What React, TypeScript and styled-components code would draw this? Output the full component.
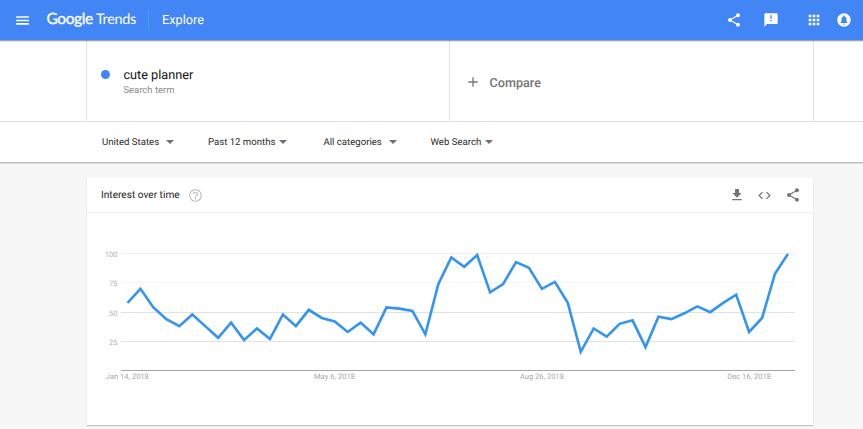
import React from 'react';
import styled, { createGlobalStyle } from 'styled-components';

const GlobalStyle = createGlobalStyle`
  * { box-sizing: border-box; }
  html, body { margin: 0; height: 100%; overflow: hidden; }
  body { background: #f7f7f7; font-family: Roboto, "Liberation Sans", sans-serif; color: #212121; text-rendering: geometricPrecision; }
`;

const Page = styled.div`
  width: 863px;
  height: 429px;
  overflow: hidden;
  background: #f7f7f7;
`;

const TopBar = styled.header`
  position: relative;
  display: flex;
  align-items: center;
  height: 40px;
  padding: 0 11px 0 14px;
  background: #4285f4;
  color: #fff;
  box-shadow: 0 1px 1px rgba(0, 0, 0, 0.32), 0 2px 1px rgba(0, 0, 0, 0.06);
`;

const Logo = styled.div`
  display: flex;
  align-items: baseline;
  margin: 0 0 2px 15.5px;
  width: 101.5px;
  height: 20px;
  line-height: 20px;
  white-space: nowrap;
`;

const Brand = styled.span`
  width: 49.5px;
  font: 400 15.5px/20px Lato, sans-serif;
  letter-spacing: -0.4px;
  -webkit-text-stroke: 0.35px currentColor;
`;

const Product = styled.span`
  font: 400 14.5px/20px Lato, sans-serif;
  letter-spacing: -0.35px;
`;

const Divider = styled.div`
  width: 1px;
  height: 21px;
  background: #4f98ee;
`;

const PageName = styled.div`
  margin: 2px 0 0 13px;
  font-size: 12.7px;
  line-height: 20px;
`;

const BarActions = styled.nav`
  display: flex;
  align-items: center;
  margin-left: auto;
`;

const IconButton = styled.button<{ $size: number; $gap?: number }>`
  display: flex;
  flex: none;
  width: ${(p) => p.$size}px;
  height: ${(p) => p.$size}px;
  margin: 0 0 0 ${(p) => p.$gap ?? 0}px;
  padding: 0;
  border: 0;
  background: none;
  color: inherit;
  svg { display: block; width: 100%; height: 100%; fill: currentColor; }
`;

const TermsRow = styled.section`
  display: flex;
  height: 82px;
  padding: 0 49px 0 86px;
  background: #fff;
  border-bottom: 1px solid #e2e2e2;
`;

const TermCell = styled.div<{ $width: number; $last?: boolean }>`
  display: flex;
  width: ${(p) => p.$width}px;
  border-left: 1px solid #e6e6e6;
  border-right: ${(p) => (p.$last ? '1px solid #e2e2e2' : '0')};
`;

const Dot = styled.span`
  width: 9px;
  height: 9px;
  margin: 30px 13.4px 0 14px;
  border-radius: 50%;
  background: #4285f4;
`;

const TermText = styled.div`
  padding-top: 27px;
`;

const TermName = styled.div`
  font-size: 12.7px;
  line-height: 17px;
  color: #111;
`;

const TermKind = styled.div`
  font-size: 9.5px;
  line-height: 13px;
  color: #8c8c8c;
`;

const Compare = styled.div`
  display: flex;
  align-items: center;
  height: 20px;
  margin: 32px 0 0 15px;
  gap: 8.6px;
  font-size: 12.6px;
  font-weight: 500;
  color: #757575;
  span { margin-top: 2px; }
`;

const Filters = styled.section`
  position: relative;
  display: flex;
  align-items: center;
  height: 40px;
  padding-left: 102px;
  background: #fff;
  box-shadow: 0 1px 0 #bdbdbd, 0 2px 0 #dedede;
`;

const Filter = styled.div<{ $width: number; $label: number }>`
  display: flex;
  align-items: center;
  width: ${(p) => p.$width}px;
  font-size: 9.6px;
  line-height: 14px;
  white-space: nowrap;
  color: #2a2a2a;
  span { width: ${(p) => p.$label}px; margin-top: 2px; }
`;

const Caret = styled.i`
  border: 3.5px solid transparent;
  border-width: 4px 4px 0;
  border-top-color: #707070;
`;

const Card = styled.main`
  width: 726.5px;
  height: 247px;
  margin: 16px 0 0 86.6px;
  background: #fff;
  box-shadow: 0 1px 1px rgba(0, 0, 0, 0.16), 0 1px 1px rgba(0, 0, 0, 0.06);
`;

const CardHeader = styled.div`
  display: flex;
  align-items: center;
  height: 35px;
  padding: 0 12.2px 0 14.4px;
  border-bottom: 1px solid #ececec;
  color: #757575;
`;

const CardTitle = styled.h1`
  width: 87.4px;
  margin: 2px 0 0;
  font-size: 10.15px;
  font-weight: 400;
  line-height: 14px;
  white-space: nowrap;
  color: #212121;
`;

const CardActions = styled.div`
  display: flex;
  align-items: center;
  margin-left: auto;
`;

const Plot = styled.svg`
  display: block;
  width: 726px;
  height: 190px;
  font-family: Roboto, sans-serif;
  font-size: 7.5px;
`;

const ShareIcon = () => (
  <svg viewBox="0 0 24 24"><path d="M18 16.08c-.76 0-1.44.3-1.96.77L8.91 12.7c.05-.23.09-.46.09-.7s-.04-.47-.09-.7l7.05-4.11c.54.5 1.25.81 2.04.81 1.66 0 3-1.34 3-3s-1.34-3-3-3-3 1.34-3 3c0 .24.04.47.09.7L8.04 9.81C7.5 9.31 6.79 9 6 9c-1.66 0-3 1.34-3 3s1.34 3 3 3c.79 0 1.5-.31 2.04-.81l7.12 4.16c-.05.21-.08.43-.08.65 0 1.61 1.31 2.92 2.92 2.92s2.92-1.31 2.92-2.92-1.31-2.92-2.92-2.92z" /></svg>
);
const MenuIcon = () => (
  <svg viewBox="0 0 24 24"><path d="M3 18h18v-2.5H3V18zm0-5h18v-2.2H3V13zm0-7v2.2h18V6H3z" /></svg>
);
const FeedbackIcon = () => (
  <svg viewBox="0 0 24 24"><path d="M20 2H4c-1.1 0-2 .9-2 2v18l4-4h14c1.1 0 2-.9 2-2V4c0-1.1-.9-2-2-2zm-7 12h-2v-2h2v2zm0-4h-2V5h2v5z" /></svg>
);
const AppsIcon = () => (
  <svg viewBox="0 0 24 24"><path d="M4 8h4V4H4v4zm6 12h4v-4h-4v4zm-6 0h4v-4H4v4zm0-6h4v-4H4v4zm6 0h4v-4h-4v4zm6-10v4h4V4h-4zm-6 4h4V4h-4v4zm6 6h4v-4h-4v4zm0 6h4v-4h-4v4z" /></svg>
);
const BellIcon = () => (
  <svg viewBox="0 0 24 24"><path d="M12 2C6.48 2 2 6.48 2 12s4.48 10 10 10 10-4.48 10-10S17.52 2 12 2zm0 17c-.9 0-1.6-.6-1.6-1.4h3.2c0 .8-.7 1.4-1.6 1.4zm5-2.4H7v-1.1l1.2-1.1V11c0-2.2 1.1-3.9 3-4.3V5.8c0-.5.3-.8.8-.8s.8.3.8.8v.9c1.9.4 3 2.1 3 4.3v3.4l1.2 1.1v1.1z" /></svg>
);
const PlusIcon = () => (
  <svg viewBox="0 0 24 24"><path d="M19 13h-6v6h-2v-6H5v-2h6V5h2v6h6v2z" /></svg>
);
const HelpIcon = () => (
  <svg viewBox="0 0 24 24" color="#b5b5b5"><path d="M11 18h2v-2h-2v2zm1-16C6.48 2 2 6.48 2 12s4.48 10 10 10 10-4.48 10-10S17.52 2 12 2zm0 18.4c-4.63 0-8.4-3.77-8.4-8.4S7.37 3.6 12 3.6s8.4 3.77 8.4 8.4-3.77 8.4-8.4 8.4zM12 6c-2.21 0-4 1.79-4 4h1.7c0-1.27 1.03-2.3 2.3-2.3s2.3 1.03 2.3 2.3c0 2-3.15 1.75-3.15 5h1.7c0-2.25 3.15-2.5 3.15-5 0-2.21-1.79-4-4-4z" /></svg>
);
const DownloadIcon = () => (
  <svg viewBox="0 0 24 24"><path d="M19 9h-4V3H9v6H5l7 7 7-7zM5 18v2h14v-2H5z" /></svg>
);
const CodeIcon = () => (
  <svg viewBox="0 0 24 24"><path d="M9.4 16.6L4.8 12l4.6-4.6L8 6l-6 6 6 6 1.4-1.4zm5.2 0l4.6-4.6-4.6-4.6L16 6l6 6-6 6-1.4-1.4z" /></svg>
);

const interest = [
  58, 70, 54, 44, 38, 48, 38, 28, 41, 26, 36, 27, 48, 38, 52, 45, 42, 33, 41, 31, 54, 53, 51, 31, 74, 97,
  89, 99, 67, 74, 93, 88, 70, 76, 58, 16, 36, 29, 40, 43, 20, 46, 44, 49, 55, 50, 58, 65, 33, 45, 83, 100,
];

const baseline = 157.4;
const yOf = (v: number) => baseline - v * 1.165;
const points = interest.map((v, i) => `${(40.5 + i * 12.95).toFixed(2)},${yOf(v).toFixed(2)}`).join(' ');

const gridLines = [
  { value: 100, y: 40.5, color: '#f0f0f0' },
  { value: 75, y: 69.5, color: '#f5f5f5' },
  { value: 50, y: 99.5, color: '#e2e2e2' },
  { value: 25, y: 128.5, color: '#e2e2e2' },
];

const dates = [
  { label: 'Jan 14, 2018', x: 40.3, width: 43 },
  { label: 'May 6, 2018', x: 247.5, width: 41 },
  { label: 'Aug 26, 2018', x: 454.9, width: 44 },
  { label: 'Dec 16, 2018', x: 662.1, width: 43.5 },
];

const filters = [
  { label: 'United States', width: 106, labelWidth: 64 },
  { label: 'Past 12 months', width: 115.5, labelWidth: 71 },
  { label: 'All categories', width: 107, labelWidth: 65 },
  { label: 'Web Search', width: 80, labelWidth: 54.5 },
];

export default function App() {
  return (
    <Page>
      <GlobalStyle />
      <TopBar>
        <IconButton $size={17} aria-label="Menu"><MenuIcon /></IconButton>
        <Logo><Brand>Google</Brand><Product>Trends</Product></Logo>
        <Divider />
        <PageName>Explore</PageName>
        <BarActions>
          <IconButton $size={16} aria-label="Share"><ShareIcon /></IconButton>
          <IconButton $size={16} $gap={21} aria-label="Feedback"><FeedbackIcon /></IconButton>
          <IconButton $size={16} $gap={27} aria-label="Apps"><AppsIcon /></IconButton>
          <IconButton $size={16} $gap={14} aria-label="Notifications"><BellIcon /></IconButton>
        </BarActions>
      </TopBar>
      <TermsRow>
        <TermCell $width={363}>
          <Dot />
          <TermText>
            <TermName>cute planner</TermName>
            <TermKind>Search term</TermKind>
          </TermText>
        </TermCell>
        <TermCell $width={365} $last>
          <Compare>
            <IconButton $size={16} aria-label="Add comparison"><PlusIcon /></IconButton>
            <span>Compare</span>
          </Compare>
        </TermCell>
      </TermsRow>
      <Filters>
        {filters.map((f) => (
          <Filter key={f.label} $width={f.width} $label={f.labelWidth}>
            <span>{f.label}</span>
            <Caret />
          </Filter>
        ))}
      </Filters>
      <Card>
        <CardHeader>
          <CardTitle>Interest over time</CardTitle>
          <IconButton $size={15} aria-label="Help"><HelpIcon /></IconButton>
          <CardActions>
            <IconButton $size={16} aria-label="Download"><DownloadIcon /></IconButton>
            <IconButton $size={15} $gap={12} aria-label="Embed"><CodeIcon /></IconButton>
            <IconButton $size={16} $gap={12.5} aria-label="Share chart"><ShareIcon /></IconButton>
          </CardActions>
        </CardHeader>
        <Plot viewBox="0 0 726 190">
          {gridLines.map((g) => (
            <g key={g.value}>
              <line x1="34" x2="708" y1={g.y} y2={g.y} stroke={g.color} />
              <text x="30.4" y={g.y + 3} textAnchor="end" fill="#b0b0b0">{g.value}</text>
            </g>
          ))}
          <line x1="34" x2="708" y1="157.5" y2="157.5" stroke="#a6a6a6" />
          <polyline points={points} fill="none" stroke="#3394f2" strokeWidth="2.6" />
          {dates.map((d) => (
            <text key={d.label} x={d.x} y="166.3" textAnchor="middle" textLength={d.width} fill="#a8a8a8">{d.label}</text>
          ))}
        </Plot>
      </Card>
    </Page>
  );
}
